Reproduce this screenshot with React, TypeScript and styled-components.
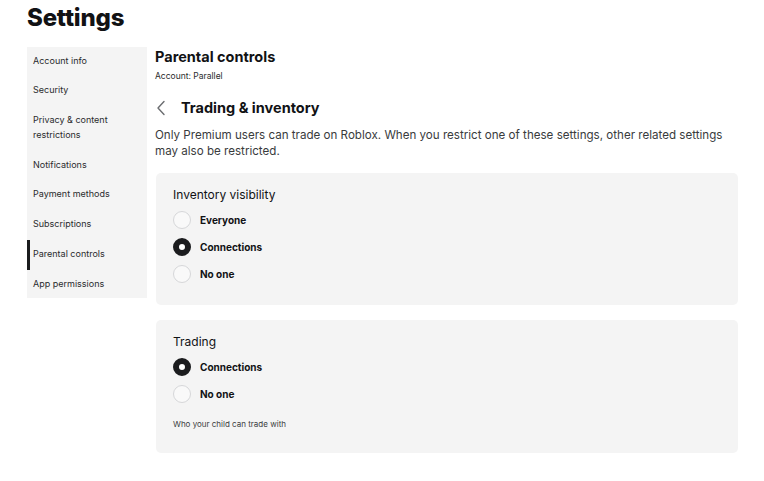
import React from 'react';
import styled, { createGlobalStyle } from 'styled-components';

const GlobalStyle = createGlobalStyle`
  html, body {
    margin: 0;
    padding: 0;
    background: #fff;
    font-family: Inter, "Open Sans", sans-serif;
    color: #111214;
  }
`;

const Page = styled.div`
  width: 764px;
  padding: 0 26px 0 27px;
  box-sizing: border-box;
`;

const Title = styled.h1`
  margin: 0;
  padding-top: 3px;
  font-size: 24px;
  line-height: 30px;
  font-weight: 800;
  letter-spacing: -0.2px;
  height: 44px;
`;

const Layout = styled.div`
  display: flex;
  align-items: flex-start;
  gap: 8px;
`;

const Sidebar = styled.nav`
  width: 120px;
  height: 251px;
  flex-shrink: 0;
  background: #f4f4f4;
  display: flex;
  flex-direction: column;
`;

const NavItem = styled.div<{ active?: boolean }>`
  padding: 5.7px 6px 9px 3px;
  font-size: 9px;
  line-height: 15px;
  color: #2a2b2d;
  border-left: 3px solid ${p => (p.active ? '#1b1c1e' : 'transparent')};
`;

const Main = styled.main`
  flex: 1;
  display: flex;
  flex-direction: column;
  padding-top: 1px;
`;

const Heading = styled.h2`
  margin: 0;
  font-size: 14.5px;
  line-height: 18px;
  font-weight: 700;
`;

const Account = styled.div`
  font-size: 8.5px;
  line-height: 12px;
  margin-top: 4px;
  color: #2a2b2d;
`;

const SubHeader = styled.div`
  display: flex;
  align-items: center;
  gap: 15px;
  margin-top: 16px;
  height: 20px;
`;

const BackButton = styled.button`
  border: none;
  background: none;
  padding: 0;
  margin-left: 1px;
  display: flex;
  align-items: center;
  cursor: pointer;
`;

const SubTitle = styled.h3`
  margin: 0;
  font-size: 14.5px;
  line-height: 20px;
  font-weight: 700;
`;

const Description = styled.p`
  margin: 9px 0 0;
  font-size: 11.6px;
  line-height: 16px;
  color: #393b3d;
  padding-right: 10px;
`;

const Card = styled.section<{ tall?: boolean }>`
  margin: 14px 0 0 1px;
  background: #f4f4f4;
  border-radius: 5px;
  padding: 14px 17px 0;
  height: ${p => (p.tall ? '133px' : '132px')};
  box-sizing: border-box;

  & + & {
    margin-top: 15px;
  }
`;

const CardTitle = styled.div`
  font-size: 12px;
  line-height: 16px;
  margin-bottom: 3px;
`;

const Option = styled.label`
  display: flex;
  align-items: center;
  gap: 9px;
  height: 27px;
  font-size: 10px;
  font-weight: 700;
  cursor: pointer;
`;

const Radio = styled.span<{ checked?: boolean }>`
  width: 18px;
  height: 18px;
  box-sizing: border-box;
  border-radius: 50%;
  flex-shrink: 0;
  background: ${p => (p.checked ? '#fff' : '#f9f9f9')};
  border: ${p => (p.checked ? '6px solid #1b1c1e' : '1px solid #d6d7d9')};
`;

const Caption = styled.div`
  font-size: 8px;
  line-height: 12px;
  color: #3b3d40;
  margin-top: 11px;
`;

const navItems = [
  'Account info',
  'Security',
  'Privacy & content restrictions',
  'Notifications',
  'Payment methods',
  'Subscriptions',
  'Parental controls',
  'App permissions',
];

const ChevronLeft = () => (
  <svg width="10" height="16" viewBox="0 0 10 16" fill="none">
    <path d="M8 1.5 L2 8 L8 14.5" stroke="#6b6d70" strokeWidth="1.4" strokeLinecap="round" strokeLinejoin="round" />
  </svg>
);

type Choice = { label: string; checked?: boolean };

const RadioGroup: React.FC<{ options: Choice[] }> = ({ options }) => (
  <>
    {options.map(o => (
      <Option key={o.label}>
        <Radio checked={o.checked} />
        {o.label}
      </Option>
    ))}
  </>
);

const App: React.FC = () => {
  return (
    <Page>
      <GlobalStyle />
      <Title>Settings</Title>
      <Layout>
        <Sidebar>
          {navItems.map(item => (
            <NavItem key={item} active={item === 'Parental controls'}>
              {item === 'Privacy & content restrictions' ? (
                <>
                  Privacy &amp; content
                  <br />
                  restrictions
                </>
              ) : (
                item
              )}
            </NavItem>
          ))}
        </Sidebar>
        <Main>
          <Heading>Parental controls</Heading>
          <Account>Account: Parallel</Account>
          <SubHeader>
            <BackButton aria-label="Back">
              <ChevronLeft />
            </BackButton>
            <SubTitle>Trading &amp; inventory</SubTitle>
          </SubHeader>
          <Description>
            Only Premium users can trade on Roblox. When you restrict one of these settings, other related settings
            may also be restricted.
          </Description>
          <Card>
            <CardTitle>Inventory visibility</CardTitle>
            <RadioGroup
              options={[{ label: 'Everyone' }, { label: 'Connections', checked: true }, { label: 'No one' }]}
            />
          </Card>
          <Card tall>
            <CardTitle>Trading</CardTitle>
            <RadioGroup options={[{ label: 'Connections', checked: true }, { label: 'No one' }]} />
            <Caption>Who your child can trade with</Caption>
          </Card>
        </Main>
      </Layout>
    </Page>
  );
};

export default App;
